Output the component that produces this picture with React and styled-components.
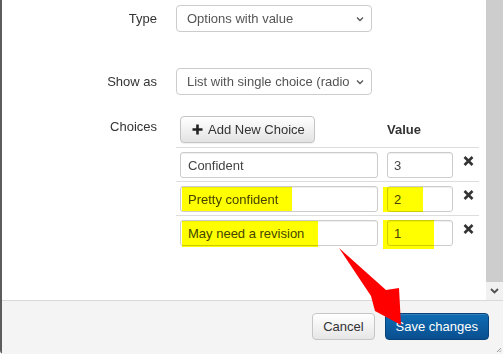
import React from 'react';
import styled, { createGlobalStyle } from 'styled-components';

const GlobalStyle = createGlobalStyle`
    html, body {
        margin: 0;
        padding: 0;
        overflow: hidden;
        background: #ffffff;
    }
    body {
        font-family: "Liberation Sans", Arial, sans-serif;
        font-size: 13px;
        color: #333;
    }
    * {
        box-sizing: border-box;
    }
`;

const choices = [
    { label: 'Confident', value: '3' },
    { label: 'Pretty confident', value: '2', mark: { text: [6, 1, 110, 24], value: [0, 1, 40, 25] } },
    { label: 'May need a revision', value: '1', mark: { text: [6, 1, 136, 26], value: [0, 0, 51, 29] } },
];

const Chevron = () => (
    <svg width="8" height="6" viewBox="0 0 8 6">
        <path d="M1 1.5 L4 4.5 L7 1.5" fill="none" stroke="#555" strokeWidth="1.3" />
    </svg>
);

const PlusIcon = () => (
    <svg width="11" height="11" viewBox="0 0 11 11">
        <path d="M5.5 0.5 V10.5 M0.5 5.5 H10.5" stroke="#222" strokeWidth="2.6" />
    </svg>
);

const RemoveIcon = () => (
    <svg width="11" height="10" viewBox="0 0 11 10">
        <path d="M1.5 1 L9.5 9 M9.5 1 L1.5 9" stroke="#333" strokeWidth="2.6" />
    </svg>
);

const App = () => {
    return (
        <Page>
            <GlobalStyle />
            <Frame>
                <Main>
                    <Content>
                        {/* Type */}
                        <FormRow $after={36}>
                            <Label>Type</Label>
                            <Select>
                                <SelectText>Options with value</SelectText>
                                <Chevron />
                            </Select>
                        </FormRow>

                        {/* Show as */}
                        <FormRow $after={21}>
                            <Label>Show as</Label>
                            <Select>
                                <SelectText>List with single choice (radio buttons)</SelectText>
                                <Chevron />
                            </Select>
                        </FormRow>

                        {/* Choices table */}
                        <FormRow $top>
                            <Label $pad={2}>Choices</Label>
                            <Table>
                                <HeadRow>
                                    <Cell>
                                        <AddButton>
                                            <PlusIcon />
                                            Add New Choice
                                        </AddButton>
                                    </Cell>
                                    <HeadCell>Value</HeadCell>
                                    <Cell />
                                </HeadRow>
                                {choices.map((c) => (
                                    <ChoiceRow key={c.label}>
                                        <Cell>
                                            <Field>{c.label}</Field>
                                            {c.mark && <Highlight style={{ left: c.mark.text[0], top: c.mark.text[1], width: c.mark.text[2], height: c.mark.text[3] }} />}
                                        </Cell>
                                        <Cell>
                                            <Field $narrow>{c.value}</Field>
                                            {c.mark && <Highlight style={{ left: c.mark.value[0], top: c.mark.value[1], width: c.mark.value[2], height: c.mark.value[3] }} />}
                                        </Cell>
                                        <RemoveCell>
                                            <RemoveIcon />
                                        </RemoveCell>
                                    </ChoiceRow>
                                ))}
                            </Table>
                        </FormRow>
                    </Content>

                    {/* Scrollbar */}
                    <Scrollbar>
                        <Thumb />
                        <ScrollArrow>
                            <svg width="9" height="6" viewBox="0 0 9 6">
                                <path d="M1 1 L4.5 4.5 L8 1" fill="none" stroke="#505050" strokeWidth="1.8" />
                            </svg>
                        </ScrollArrow>
                    </Scrollbar>
                </Main>

                {/* Footer */}
                <Footer>
                    <Button>Cancel</Button>
                    <Button $primary>Save changes</Button>
                    <Grip>
                        <svg width="6" height="6" viewBox="0 0 6 6">
                            <path d="M5 1 L1 5 M5 3.5 L3.5 5" stroke="#9a9a9a" strokeWidth="1" />
                        </svg>
                    </Grip>
                </Footer>
            </Frame>

            {/* Red annotation arrow */}
            <Annotation width="503" height="354" viewBox="0 0 503 354">
                <polygon points="339,248 386,290 399,288 401,325 375,311 371,296" fill="#ff0000" />
            </Annotation>
        </Page>
    );
};

// Page
const Page = styled.div`
    position: relative;
    width: 503px;
    height: 354px;
    overflow: hidden;
`;

// Dialog frame
const Frame = styled.div`
    width: 503px;
    height: 354px;
    display: flex;
    flex-direction: column;
    border-left: 2px solid #5c5c5c;
    border-bottom-left-radius: 4px;
    background: #fff;
`;

const Main = styled.div`
    flex: 1;
    display: flex;
    min-height: 0;
`;

const Content = styled.div`
    flex: 1;
    padding-top: 5px;
`;

// Form rows
const FormRow = styled.div`
    display: grid;
    grid-template-columns: 155px auto;
    column-gap: 19px;
    align-items: ${(p) => (p.$top ? 'start' : 'center')};
    margin-bottom: ${(p) => p.$after || 0}px;
`;

const Label = styled.div`
    text-align: right;
    font-size: 13px;
    line-height: 18px;
    color: #333;
    padding-top: ${(p) => p.$pad || 0}px;
`;

const Select = styled.div`
    width: 196px;
    height: 27px;
    display: flex;
    align-items: center;
    padding: 0 7px 0 10px;
    border: 1px solid #ccc;
    border-radius: 4px;
    background: #fff;
    color: #555;
    font-size: 13px;
    gap: 2px;
`;

const SelectText = styled.span`
    flex: 1;
    white-space: nowrap;
    overflow: hidden;
`;

// Choices table
const Table = styled.div`
    width: 303px;
`;

const HeadRow = styled.div`
    display: grid;
    grid-template-columns: 207px 73px 23px;
    align-items: center;
    padding-bottom: 4px;
    border-bottom: 1px solid #ddd;
`;

const ChoiceRow = styled.div`
    display: grid;
    grid-template-columns: 207px 73px 23px;
    align-items: start;
    padding: 4px 0 3px;
    & + & {
        border-top: 1px solid #ddd;
    }
`;

const Cell = styled.div`
    position: relative;
    padding: 0 4px;
`;

const HeadCell = styled.div`
    padding: 0 4px;
    font-weight: bold;
    font-size: 13px;
    color: #333;
`;

const RemoveCell = styled.div`
    display: flex;
    justify-content: center;
    padding: 4px 0 0 1px;
`;

const AddButton = styled.button`
    display: inline-flex;
    align-items: center;
    gap: 5px;
    height: 27px;
    padding: 0 9px 0 11px;
    font-family: inherit;
    font-size: 13px;
    color: #333;
    border: 1px solid #c4c4c4;
    border-radius: 4px;
    background: linear-gradient(#ffffff, #e3e3e3);
    box-shadow: 0 1px 1px rgba(0, 0, 0, 0.06);
`;

const Field = styled.div`
    width: ${(p) => (p.$narrow ? '66px' : '198px')};
    height: 26px;
    display: flex;
    align-items: center;
    padding: 0 ${(p) => (p.$narrow ? '6px' : '7px')};
    border: 1px solid #ccc;
    border-radius: 3px;
    background: #fff;
    box-shadow: inset 0 1px 1px rgba(0, 0, 0, 0.07);
    color: #444;
    font-size: 13px;
`;

// Yellow marker painted over the screenshot
const Highlight = styled.span`
    position: absolute;
    background: #ffff00;
    mix-blend-mode: multiply;
    pointer-events: none;
`;

// Scrollbar
const Scrollbar = styled.div`
    width: 17px;
    display: flex;
    flex-direction: column;
`;

const Thumb = styled.div`
    flex: 1;
    background: #cdcdcd;
`;

const ScrollArrow = styled.div`
    height: 18px;
    background: #f1f1f1;
    display: flex;
    align-items: center;
    justify-content: center;
`;

// Footer
const Footer = styled.div`
    position: relative;
    height: 54px;
    flex-shrink: 0;
    display: flex;
    justify-content: flex-end;
    align-items: center;
    gap: 10px;
    padding: 0 14px 2px 0;
    border-top: 1px solid #d9d9d9;
    background: #f4f4f4;
`;

const Button = styled.button`
    height: 27px;
    padding: 0 10px;
    font-family: inherit;
    font-size: 13px;
    border-radius: 4px;
    color: ${(p) => (p.$primary ? '#fff' : '#333')};
    border: 1px solid ${(p) => (p.$primary ? '#08427a' : '#c6c6c6')};
    background: ${(p) => (p.$primary ? 'linear-gradient(#0f6cb3, #094f90)' : 'linear-gradient(#ffffff, #e6e6e6)')};
    box-shadow: inset 0 1px 0 rgba(255, 255, 255, 0.15);
`;

const Grip = styled.div`
    position: absolute;
    right: 1px;
    bottom: 1px;
    display: flex;
`;

const Annotation = styled.svg`
    position: absolute;
    left: 0;
    top: 0;
    pointer-events: none;
`;

export default App;
